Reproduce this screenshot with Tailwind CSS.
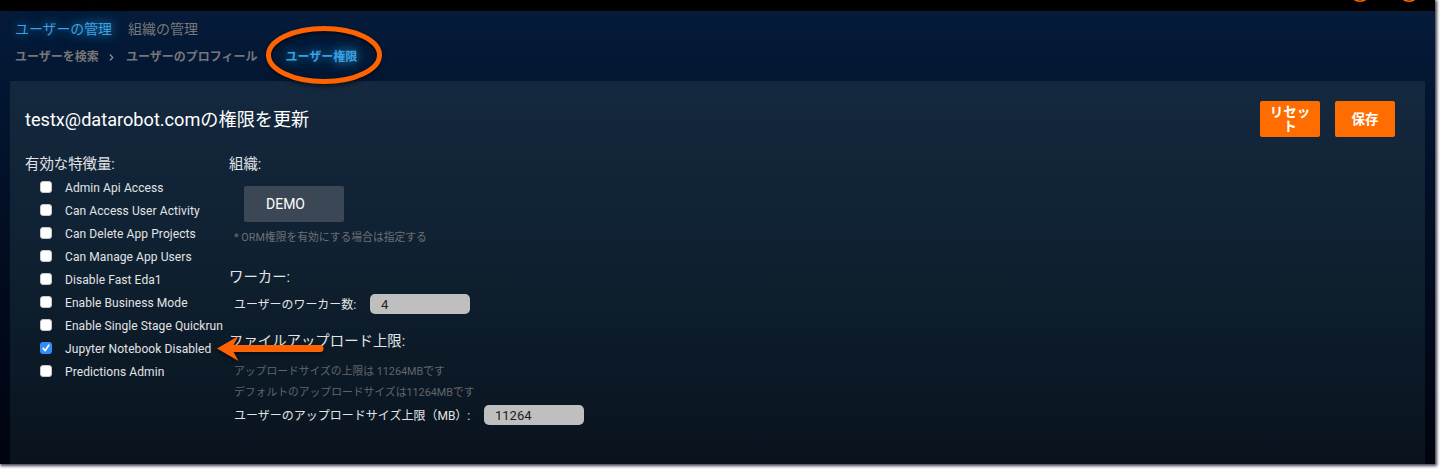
<!DOCTYPE html>
<html lang="ja">
<head>
<meta charset="utf-8">
<title>ユーザー権限</title>
<script src="https://cdn.jsdelivr.net/npm/@tailwindcss/browser@4"></script>
</head>
<body class="h-[469px] overflow-hidden bg-white font-['Roboto','Noto_Sans_CJK_JP',sans-serif]">
<div class="relative flex h-[464px] w-[1435px] flex-col bg-linear-to-b from-[#051c3b] via-[#02132c] via-30% to-[#01040f] shadow-[1px_1px_3px_1px_#403c50]">
  <header class="flex h-[11px] shrink-0 justify-end gap-[27px] overflow-hidden bg-black pr-[15px]">
    <svg class="-mt-[20px] size-[22px] shrink-0" viewBox="0 0 22 22" fill="none" stroke="#ff6a00" stroke-width="1.5"><circle cx="11" cy="11" r="10.2"/></svg>
    <svg class="-mt-[20px] size-[22px] shrink-0" viewBox="0 0 22 22" fill="none" stroke="#ff6a00" stroke-width="1.5"><circle cx="11" cy="11" r="10.2"/></svg>
  </header>
  <nav class="flex h-[35px] shrink-0 items-center gap-4 pl-[15px] text-[14px] leading-none text-[#777777]">
    <a class="w-[97px] pt-[2px] text-[13.9px] whitespace-nowrap text-[#3ba0e6] [text-shadow:0_0_10px_#1f78a8,0_0_16px_#1a5f8c]">ユーザーの管理</a>
    <a>組織の管理</a>
  </nav>
  <nav class="flex h-[22px] shrink-0 items-center pl-[15px] text-[12px] leading-none font-bold whitespace-nowrap text-[#777777]">
    <a class="w-[94px]">ユーザーを検索</a>
    <svg class="mr-[12px] h-[7px] w-[5px]" viewBox="0 0 5 7" fill="none" stroke="#8a8d92" stroke-width="1.2"><path d="M.8.5 3.8 3.5.8 6.5"/></svg>
    <a class="w-[159.500px]">ユーザーのプロフィール</a>
    <a class="text-[#3ba0e6] [text-shadow:0_0_10px_#1f78a8,0_0_16px_#1a5f8c]">ユーザー権限</a>
  </nav>
  <main class="mx-[10px] mt-[13px] flex-1 rounded-t-[2px] bg-linear-to-b from-[#14283f] via-[#0f2131] via-45% to-[#09131e] pl-[15px] text-[#e2e4e6]">
    <div class="flex h-[76px] items-center justify-between pr-[30px]">
      <h1 class="pt-[2px] text-[18.150px] leading-none text-white">testx@datarobot.comの権限を更新</h1>
      <div class="flex gap-[15px] text-[13.500px] leading-[14px] font-bold text-white">
        <button class="h-9 w-[60px] rounded-[2px] bg-[#ff6d00]">リセッ<br>ト</button>
        <button class="h-9 w-[60px] rounded-[2px] bg-[#ff6d00]">保存</button>
      </div>
    </div>
    <div class="flex whitespace-nowrap">
      <section class="w-[204px]">
        <h2 class="h-[18px] text-[14.4px] leading-[15px]">有効な特徴量:</h2>
        <ul class="pl-[15px] text-[12px] leading-[19px] tracking-[0.08px]">
          <li class="flex h-[23px] items-center gap-[13px]"><span class="size-3 rounded-[3px] border border-[#c8c8c8] bg-white"></span><span class="pt-[4px]">Admin Api Access</span></li>
          <li class="flex h-[23px] items-center gap-[13px]"><span class="size-3 rounded-[3px] border border-[#c8c8c8] bg-white"></span><span class="pt-[4px]">Can Access User Activity</span></li>
          <li class="flex h-[23px] items-center gap-[13px]"><span class="size-3 rounded-[3px] border border-[#c8c8c8] bg-white"></span><span class="pt-[4px]">Can Delete App Projects</span></li>
          <li class="flex h-[23px] items-center gap-[13px]"><span class="size-3 rounded-[3px] border border-[#c8c8c8] bg-white"></span><span class="pt-[4px]">Can Manage App Users</span></li>
          <li class="flex h-[23px] items-center gap-[13px]"><span class="size-3 rounded-[3px] border border-[#c8c8c8] bg-white"></span><span class="pt-[4px]">Disable Fast Eda1</span></li>
          <li class="flex h-[23px] items-center gap-[13px]"><span class="size-3 rounded-[3px] border border-[#c8c8c8] bg-white"></span><span class="pt-[4px]">Enable Business Mode</span></li>
          <li class="flex h-[23px] items-center gap-[13px]"><span class="size-3 shrink-0 rounded-[3px] border border-[#c8c8c8] bg-white"></span><span class="pt-[4px]">Enable Single Stage Quickrun</span></li>
          <li class="flex h-[23px] items-center gap-[13px]"><svg class="size-3 shrink-0 rounded-[3px] bg-[#2f8ef7]" viewBox="0 0 12 12" fill="none" stroke="#fff" stroke-width="1.7" stroke-linecap="round" stroke-linejoin="round"><path d="M3.2 6.4 5.2 8.6 8.8 3.2"/></svg><span class="pt-[4px]">Jupyter Notebook Disabled</span></li>
          <li class="flex h-[23px] items-center gap-[13px]"><span class="size-3 rounded-[3px] border border-[#c8c8c8] bg-white"></span><span class="pt-[4px]">Predictions Admin</span></li>
        </ul>
      </section>
      <section>
        <h2 class="h-[29px] text-[14.4px] leading-[15px]">組織:</h2>
        <div class="ml-[15px] flex h-9 w-[100px] items-center rounded-[2px] bg-[#3b4754] pl-[22px] text-[14px] text-white">DEMO</div>
        <p class="mt-[5px] ml-[5px] h-[20px] text-[10.800px] leading-[22px] text-[#6c7075]">* ORM権限を有効にする場合は指定する</p>
        <h2 class="mt-[20px] h-[20px] text-[14.4px] leading-[22px]">ワーカー:</h2>
        <div class="mt-[7px] ml-[5px] flex h-5 items-center text-[11.950px] leading-none"><span class="w-[136px] pt-[3px]">ユーザーのワーカー数:</span><span class="h-5 w-[100px] rounded-[5px] bg-[#bfbfbf] pl-[11px] text-[13px] leading-[21px] text-[#202024]">4</span></div>
        <h2 class="mt-[17px] h-[20px] text-[14.4px] leading-[22px]">ファイルアップロード上限:</h2>
        <p class="mt-[10px] ml-[5px] h-[21px] text-[10.800px] leading-[21px] text-[#62666b]">アップロードサイズの上限は 11264MBです</p>
        <p class="ml-[5px] h-[21px] text-[10.800px] leading-[21px] text-[#62666b]">デフォルトのアップロードサイズは11264MBです</p>
        <div class="mt-[2px] ml-[5px] flex h-5 items-center text-[12px] leading-none"><span class="w-[250px] pt-[2px]">ユーザーのアップロードサイズ上限（MB）:</span><span class="h-5 w-[100px] rounded-[5px] bg-[#bfbfbf] pl-[11px] text-[13px] leading-[21px] text-[#202024]">11264</span></div>
      </section>
    </div>
  </main>
  <svg class="absolute top-[20px] left-[260px] h-[70px] w-[130px] drop-shadow-[0_2px_2px_rgba(0,0,0,0.6)]" viewBox="260 20 130 70" fill="none" stroke="#ff6200" stroke-width="5"><ellipse cx="324" cy="55" rx="55.5" ry="26.5"/></svg>
  <svg class="absolute top-[330px] left-[210px] h-[40px] w-[120px] drop-shadow-[0_2px_2px_rgba(0,0,0,0.6)]" viewBox="210 330 120 40" fill="#ff6200"><path d="M217 348.5 238.500 336 233.500 345H320a3.500 3.500 0 0 1 0 7H233.500L238.500 361Z"/></svg>
</div>
</body>
</html>
